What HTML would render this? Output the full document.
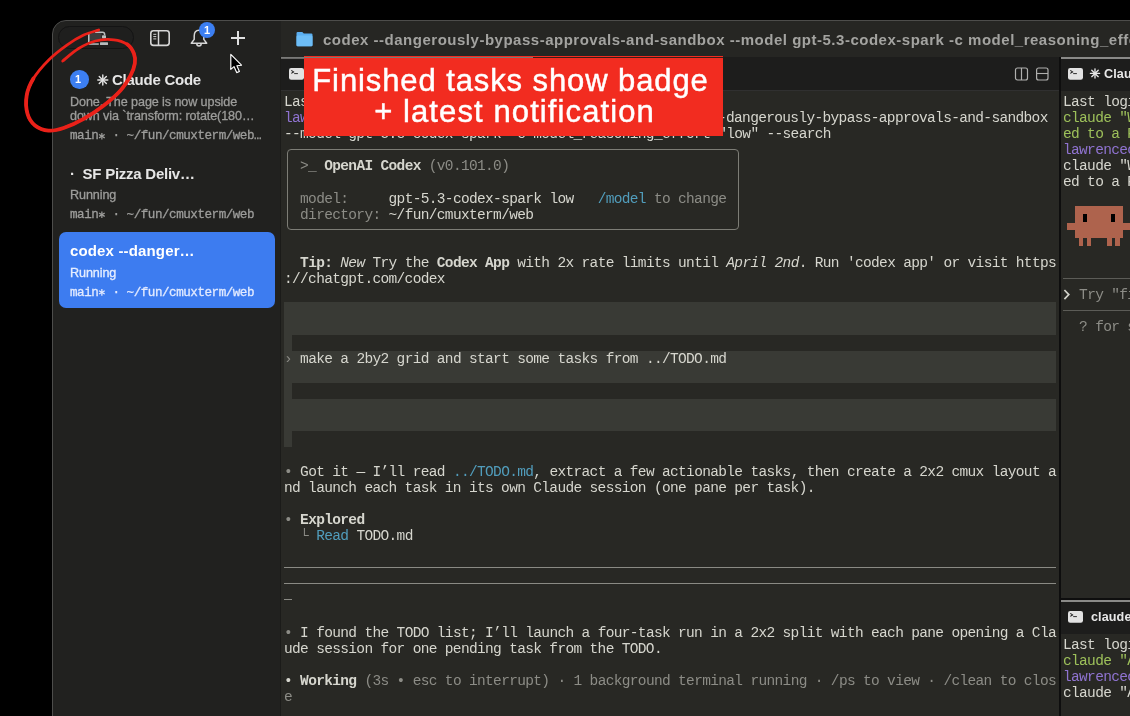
<!DOCTYPE html>
<html><head><meta charset="utf-8"><style>
html,body{margin:0;padding:0;width:1130px;height:716px;overflow:hidden;background:#000;}
body{position:relative;font-family:"Liberation Sans",sans-serif;}
.abs,.t{will-change:transform;}
.t{position:absolute;white-space:pre;font-family:"Liberation Mono",monospace;font-size:14.5px;letter-spacing:-0.660px;line-height:16.09px;height:16.09px;color:#d6d6ce;}
.abs{position:absolute;}
</style></head><body>
<!-- window -->
<div class="abs" style="left:52px;top:20px;width:1100px;height:720px;background:#21211f;border:1px solid #4d4d4b;border-radius:14px 0 0 0;box-sizing:border-box;overflow:hidden">
</div>
<div class="abs" style="left:280px;top:57px;width:2px;height:659px;background:#1b1b19"></div>
<!-- title bar right portion -->
<div class="abs" style="left:281px;top:21px;width:849px;height:36px;background:#262623"></div>
<!-- middle pane -->
<div class="abs" style="left:281px;top:57px;width:778px;height:659px;background:#282824"></div>
<div class="abs" style="left:281px;top:57px;width:778px;height:33.5px;background:#1d1d1c;border-bottom:1px solid #303030;box-sizing:border-box"></div>
<div class="abs" style="left:281px;top:57px;width:200px;height:1.5px;background:#6a6a68"></div>
<!-- divider -->
<div class="abs" style="left:1059px;top:57px;width:2px;height:659px;background:#0e0e0e"></div>
<!-- right top pane -->
<div class="abs" style="left:1061px;top:57px;width:69px;height:541px;background:#282824"></div>
<div class="abs" style="left:1061px;top:57px;width:69px;height:33.5px;background:#1d1d1c"></div>
<div class="abs" style="left:1061px;top:56.8px;width:69px;height:1.6px;background:#8a8a88"></div>
<!-- right bottom pane -->
<div class="abs" style="left:1061px;top:598px;width:69px;height:2px;background:#0e0e0e"></div>
<div class="abs" style="left:1061px;top:600px;width:69px;height:116px;background:#282824"></div>
<div class="abs" style="left:1061px;top:600px;width:69px;height:33.5px;background:#1d1d1c"></div>
<div class="abs" style="left:1061px;top:600px;width:69px;height:2px;background:#8a8a88"></div>

<div style="position:absolute;left:284px;top:302.37px;width:771.84px;height:32.18px;background:#393a35;"></div>
<div style="position:absolute;left:284px;top:334.55px;width:8.04px;height:16.09px;background:#393a35;"></div>
<div style="position:absolute;left:284px;top:350.64px;width:771.84px;height:32.18px;background:#393a35;"></div>
<div style="position:absolute;left:284px;top:382.82px;width:8.04px;height:16.09px;background:#393a35;"></div>
<div style="position:absolute;left:284px;top:398.91px;width:771.84px;height:32.18px;background:#393a35;"></div>
<div style="position:absolute;left:284px;top:431.09px;width:8.04px;height:16.09px;background:#393a35;"></div>
<div style="position:absolute;left:284px;top:566.9px;width:771.84px;height:1.1px;background:#8a8a84;"></div>
<div style="position:absolute;left:284px;top:583.0px;width:771.84px;height:1.1px;background:#8a8a84;"></div>
<div style="position:absolute;left:284px;top:599.2px;width:8px;height:1.2px;background:#8a8a84;"></div>
<div style="position:absolute;left:1063px;top:277.6px;width:70px;height:1.2px;background:#5c5c57;"></div>
<div style="position:absolute;left:1063px;top:309.8px;width:70px;height:1.2px;background:#5c5c57;"></div>
<div style="position:absolute;left:287.3px;top:149.3px;width:451.5px;height:81px;border:1.1px solid #7d7d76;border-radius:4px;box-sizing:border-box"></div>
<div style="position:absolute;left:1075px;top:205.7px;width:48.3px;height:32.5px;background:#ae634d;"></div>
<div style="position:absolute;left:1067px;top:222.5px;width:63px;height:7.7px;background:#ae634d;"></div>
<div style="position:absolute;left:1082.5px;top:214px;width:4.8px;height:7.8px;background:#000;"></div>
<div style="position:absolute;left:1110.7px;top:214px;width:4.8px;height:7.8px;background:#000;"></div>
<div style="position:absolute;left:1078.7px;top:238px;width:4.6px;height:8px;background:#ae634d;"></div>
<div style="position:absolute;left:1086.6px;top:238px;width:4.6px;height:8px;background:#ae634d;"></div>
<div style="position:absolute;left:1107px;top:238px;width:4.6px;height:8px;background:#ae634d;"></div>
<div style="position:absolute;left:1115px;top:238px;width:4.6px;height:8px;background:#ae634d;"></div>

<div class="t" style="left:284px;top:94.00px;"><span style="">Last login: Fri Mar 13 10:02:11 on ttys004</span></div>
<div class="t" style="left:284px;top:110.09px;"><span style="color:#8f73d0">lawrencechen@Lawrences-MacBook-Pro web % </span><span style="">             </span></div>
<div class="t" style="left:718.16px;top:110.09px;"><span style="">-dangerously-bypass-approvals-and-sandbox</span></div>
<div class="t" style="left:284px;top:126.18px;"><span style="">--model gpt-5.3-codex-spark -c model_reasoning_effort="low" --search</span></div>
<div class="t" style="left:284px;top:158.36px;"><span style="color:#8c8c86">  &gt;_ </span><span style="font-weight:bold">OpenAI Codex</span><span style="color:#8c8c86"> (v0.101.0)</span></div>
<div class="t" style="left:284px;top:190.54px;"><span style="color:#8c8c86">  model:     </span><span style="">gpt-5.3-codex-spark low   </span><span style="color:#519dbc">/model</span><span style="color:#8c8c86"> to change</span></div>
<div class="t" style="left:284px;top:206.63px;"><span style="color:#8c8c86">  directory: </span><span style="">~/fun/cmuxterm/web</span></div>
<div class="t" style="left:284px;top:254.90px;"><span style="">  </span><span style="font-weight:bold">Tip:</span><span style=""> </span><span style="font-style:italic">New</span><span style=""> Try the </span><span style="font-weight:bold">Codex App</span><span style=""> with 2x rate limits until </span><span style="font-style:italic">April 2nd</span><span style="">. Run 'codex app' or visit https</span></div>
<div class="t" style="left:284px;top:270.99px;"><span style="">://chatgpt.com/codex</span></div>
<div class="t" style="left:284px;top:351.44px;"><span style="color:#8c8c86">› </span><span style="">make a 2by2 grid and start some tasks from ../TODO.md</span></div>
<div class="t" style="left:284px;top:464.07px;"><span style="color:#8c8c86">• </span><span style="">Got it — I’ll read </span><span style="color:#519dbc">../TODO.md</span><span style="">, extract a few actionable tasks, then create a 2x2 cmux layout a</span></div>
<div class="t" style="left:284px;top:480.16px;"><span style="">nd launch each task in its own Claude session (one pane per task).</span></div>
<div class="t" style="left:284px;top:512.34px;"><span style="color:#8c8c86">• </span><span style="font-weight:bold">Explored</span></div>
<div class="t" style="left:284px;top:528.43px;"><span style="color:#8c8c86">  └ </span><span style="color:#519dbc">Read</span><span style=""> TODO.md</span></div>
<div class="t" style="left:284px;top:624.97px;"><span style="color:#8c8c86">• </span><span style="">I found the TODO list; I’ll launch a four-task run in a 2x2 split with each pane opening a Cla</span></div>
<div class="t" style="left:284px;top:641.06px;"><span style="">ude session for one pending task from the TODO.</span></div>
<div class="t" style="left:284px;top:673.24px;"><span style="">• </span><span style="font-weight:bold">Working</span><span style="color:#8c8c86"> (3s • esc to interrupt) · 1 background terminal running · /ps to view · /clean to clos</span></div>
<div class="t" style="left:284px;top:689.33px;"><span style="color:#8c8c86">e</span></div>
<div class="t" style="left:1063px;top:94.00px;"><span style="">Last login: Fri</span></div>
<div class="t" style="left:1063px;top:110.09px;"><span style="color:#9dc05a">claude "Write</span></div>
<div class="t" style="left:1063px;top:126.18px;"><span style="color:#9dc05a">ed to a README</span></div>
<div class="t" style="left:1063px;top:142.27px;"><span style="color:#8f73d0">lawrencechen@</span></div>
<div class="t" style="left:1063px;top:158.36px;"><span style="">claude "Write</span></div>
<div class="t" style="left:1063px;top:174.45px;"><span style="">ed to a README</span></div>
<div class="t" style="left:1063px;top:287.08px;"><span style="">  </span><span style="color:#8c8c86">Try "fix</span></div>
<svg class="abs" style="left:0;top:0;overflow:visible" width="1" height="1"><polyline points="1064.4,290.0 1068.8,294.6 1064.4,299.2" fill="none" stroke="#d2d2ca" stroke-width="1.7"/></svg>
<div class="t" style="left:1063px;top:319.26px;"><span style="color:#8c8c86">  ? for sh</span></div>
<div class="t" style="left:1063px;top:637.00px;"><span style="">Last login: Fri</span></div>
<div class="t" style="left:1063px;top:653.09px;"><span style="color:#9dc05a">claude "Add</span></div>
<div class="t" style="left:1063px;top:669.18px;"><span style="color:#8f73d0">lawrencechen@</span></div>
<div class="t" style="left:1063px;top:685.27px;"><span style="">claude "Add</span></div>


<!-- title bar: pill -->
<div class="abs" style="left:58px;top:26px;width:76px;height:23px;border:1px solid #141414;border-radius:12px;box-sizing:border-box;background:#1f1f1e"></div>
<!-- pill icon -->
<svg class="abs" style="left:80px;top:25px" width="35" height="25" viewBox="0 0 35 25">
 <rect x="9.5" y="7.6" width="12" height="8" fill="#3c3c3c"/>
 <rect x="8" y="8.5" width="1.6" height="8.5" fill="#b8bcbd"/>
 <path d="M15 7.2 L22.5 7.2 Q24.6 7.2 24.6 9.3 L24.6 10.2" fill="none" stroke="#b8bcbd" stroke-width="1.6"/>
 <rect x="22" y="10.2" width="4" height="3.4" rx="0.8" fill="#b8bcbd"/>
 <rect x="9" y="18.3" width="9.8" height="1.5" fill="#b8bcbd"/>
 <rect x="20" y="17.3" width="8" height="2.8" rx="0.5" fill="#b8bcbd"/>
</svg>
<!-- sidebar toggle icon -->
<svg class="abs" style="left:148px;top:28px" width="24" height="20" viewBox="0 0 24 20">
 <rect x="2.8" y="2.8" width="18.4" height="14.6" rx="2.6" fill="none" stroke="#d6d6d6" stroke-width="1.6"/>
 <line x1="10.5" y1="3" x2="10.5" y2="17.2" stroke="#d6d6d6" stroke-width="1.5"/>
 <line x1="5.3" y1="6.3" x2="8.3" y2="6.3" stroke="#d6d6d6" stroke-width="1"/>
 <line x1="5.3" y1="8.6" x2="8.3" y2="8.6" stroke="#d6d6d6" stroke-width="1"/>
 <line x1="5.3" y1="10.9" x2="8.3" y2="10.9" stroke="#d6d6d6" stroke-width="1"/>
</svg>
<!-- bell -->
<svg class="abs" style="left:188px;top:27px" width="22" height="22" viewBox="0 0 22 22">
 <path d="M11 3.2 C7.6 3.2 6.2 6 6.2 9 L6.2 12.4 L3.3 16.3 L18.7 16.3 L15.8 12.4 L15.8 9 C15.8 6 14.4 3.2 11 3.2 Z" fill="none" stroke="#d6d6d6" stroke-width="1.5" stroke-linejoin="round"/>
 <path d="M8.8 16.8 A2.2 2.2 0 0 0 13.2 16.8" fill="none" stroke="#d6d6d6" stroke-width="1.5"/>
</svg>
<div class="abs" style="left:199px;top:22px;width:16px;height:16px;border-radius:50%;background:#3c7ff2;color:#fff;font:bold 11px 'Liberation Sans';text-align:center;line-height:16px">1</div>
<!-- plus -->
<div class="abs" style="left:231px;top:37.4px;width:14px;height:2px;background:#e0e0e0"></div>
<div class="abs" style="left:237px;top:31.4px;width:2px;height:14px;background:#e0e0e0"></div>

<!-- title -->
<svg class="abs" style="left:295px;top:30px" width="20" height="18" viewBox="0 0 20 18">
 <path d="M1.5 3.2 Q1.5 2 2.7 2 L7.3 2 L8.8 3.6 L16.3 3.6 Q17.5 3.6 17.5 4.8 L17.5 15 Q17.5 16.2 16.3 16.2 L2.7 16.2 Q1.5 16.2 1.5 15 Z" fill="#5aaef0"/>
 <rect x="1.5" y="5.6" width="16" height="10.6" rx="1.2" fill="#6dbdf6"/>
</svg>
<div class="abs" style="left:323px;top:31px;white-space:pre;font:bold 15px 'Liberation Sans';letter-spacing:0.51px;color:#a3a3a0">codex --dangerously-bypass-approvals-and-sandbox --model gpt-5.3-codex-spark -c model_reasoning_effort="low" --search</div>

<!-- tab icons -->
<svg class="abs" style="left:288.6px;top:68.2px" width="15" height="11.8" viewBox="0 0 15 11.8"><rect x="0" y="0" width="15" height="11.8" rx="2.2" fill="#e2e2e2"/><path d="M2.3 2.4 L4.6 3.9 L2.3 5.4" fill="none" stroke="#1a1a1a" stroke-width="1.05"/><line x1="5.2" y1="5.6" x2="8.9" y2="5.6" stroke="#1a1a1a" stroke-width="0.9"/></svg>
<svg class="abs" style="left:1068px;top:68px" width="15" height="11.8" viewBox="0 0 15 11.8"><rect x="0" y="0" width="15" height="11.8" rx="2.2" fill="#e2e2e2"/><path d="M2.3 2.4 L4.6 3.9 L2.3 5.4" fill="none" stroke="#1a1a1a" stroke-width="1.05"/><line x1="5.2" y1="5.6" x2="8.9" y2="5.6" stroke="#1a1a1a" stroke-width="0.9"/></svg>
<svg class="abs" style="left:0;top:0;overflow:visible" width="1" height="1"><line x1="1090.40" y1="73.40" x2="1099.60" y2="73.40" stroke="#e6e6e6" stroke-width="1.35" stroke-linecap="round"/><line x1="1091.75" y1="70.15" x2="1098.25" y2="76.65" stroke="#e6e6e6" stroke-width="1.35" stroke-linecap="round"/><line x1="1095.00" y1="68.80" x2="1095.00" y2="78.00" stroke="#e6e6e6" stroke-width="1.35" stroke-linecap="round"/><line x1="1098.25" y1="70.15" x2="1091.75" y2="76.65" stroke="#e6e6e6" stroke-width="1.35" stroke-linecap="round"/></svg>
<div class="abs" style="left:1104px;top:67.53px;white-space:pre;font:bold 12.6px 'Liberation Sans';line-height:1;letter-spacing:0.1px;color:#e8e8e8;">Claude Code</div>
<svg class="abs" style="left:1068px;top:611px" width="15" height="11.8" viewBox="0 0 15 11.8"><rect x="0" y="0" width="15" height="11.8" rx="2.2" fill="#e2e2e2"/><path d="M2.3 2.4 L4.6 3.9 L2.3 5.4" fill="none" stroke="#1a1a1a" stroke-width="1.05"/><line x1="5.2" y1="5.6" x2="8.9" y2="5.6" stroke="#1a1a1a" stroke-width="0.9"/></svg>
<div class="abs" style="left:1090.8px;top:610.83px;white-space:pre;font:bold 12.6px 'Liberation Sans';line-height:1;letter-spacing:0.1px;color:#e8e8e8;">claude "Add a</div>

<!-- split icons -->
<svg class="abs" style="left:1013px;top:66px" width="38" height="16" viewBox="0 0 38 16">
 <rect x="2.5" y="2" width="12" height="12" rx="2" fill="none" stroke="#b0b0ae" stroke-width="1.2"/>
 <line x1="8.5" y1="2" x2="8.5" y2="14" stroke="#b0b0ae" stroke-width="1.2"/>
 <rect x="23.6" y="2" width="11.4" height="12" rx="2" fill="none" stroke="#b0b0ae" stroke-width="1.2"/>
 <line x1="23.6" y1="7.5" x2="35" y2="7.5" stroke="#b0b0ae" stroke-width="1.1"/>
</svg>

<!-- sidebar -->
<div class="abs" style="left:70px;top:70px;width:18.5px;height:18.5px;border-radius:50%;background:#3c7ff2"></div>
<div class="abs" style="left:75.3px;top:74.29px;white-space:pre;font:bold 11px 'Liberation Sans';line-height:1;letter-spacing:0px;color:#fff;">1</div>
<svg class="abs" style="left:0;top:0;overflow:visible" width="1" height="1"><line x1="97.80" y1="80.00" x2="107.80" y2="80.00" stroke="#e2e2e2" stroke-width="1.45" stroke-linecap="round"/><line x1="99.26" y1="76.46" x2="106.34" y2="83.54" stroke="#e2e2e2" stroke-width="1.45" stroke-linecap="round"/><line x1="102.80" y1="75.00" x2="102.80" y2="85.00" stroke="#e2e2e2" stroke-width="1.45" stroke-linecap="round"/><line x1="106.34" y1="76.46" x2="99.26" y2="83.54" stroke="#e2e2e2" stroke-width="1.45" stroke-linecap="round"/></svg>
<div class="abs" style="left:112.4px;top:72.20px;white-space:pre;font:bold 15px 'Liberation Sans';line-height:1;letter-spacing:-0.25px;color:#e6e6e6;">Claude Code</div>
<div class="abs" style="left:70px;top:95.63px;white-space:pre;font:12.6px 'Liberation Sans';line-height:1;letter-spacing:-0.1px;color:#9d9d9b;-webkit-text-stroke:0.3px #9d9d9b;">Done. The page is now upside</div>
<div class="abs" style="left:70px;top:110.23px;white-space:pre;font:12.6px 'Liberation Sans';line-height:1;letter-spacing:-0.1px;color:#9d9d9b;-webkit-text-stroke:0.3px #9d9d9b;">down via `transform: rotate(180…</div>
<div class="abs" style="left:70px;top:130.44px;white-space:pre;font:12.6px 'Liberation Mono';line-height:1;letter-spacing:-0.48px;color:#9d9d9b;-webkit-text-stroke:0.3px #9d9d9b;">main  · ~/fun/cmuxterm/web…</div>
<svg class="abs" style="left:0;top:0;overflow:visible" width="1" height="1"><line x1="101.86" y1="132.90" x2="101.86" y2="139.50" stroke="#9d9d9b" stroke-width="1.25" stroke-linecap="butt"/><line x1="104.72" y1="134.55" x2="99.00" y2="137.85" stroke="#9d9d9b" stroke-width="1.25" stroke-linecap="butt"/><line x1="104.72" y1="137.85" x2="99.00" y2="134.55" stroke="#9d9d9b" stroke-width="1.25" stroke-linecap="butt"/></svg>
<div class="abs" style="left:70px;top:165.80px;white-space:pre;font:bold 15px 'Liberation Sans';line-height:1;letter-spacing:-0.25px;color:#e6e6e6;">·  SF Pizza Deliv…</div>
<div class="abs" style="left:70px;top:188.93px;white-space:pre;font:12.6px 'Liberation Sans';line-height:1;letter-spacing:-0.1px;color:#9d9d9b;-webkit-text-stroke:0.3px #9d9d9b;">Running</div>
<div class="abs" style="left:70px;top:208.94px;white-space:pre;font:12.6px 'Liberation Mono';line-height:1;letter-spacing:-0.48px;color:#9d9d9b;-webkit-text-stroke:0.3px #9d9d9b;">main  · ~/fun/cmuxterm/web</div>
<svg class="abs" style="left:0;top:0;overflow:visible" width="1" height="1"><line x1="101.86" y1="211.40" x2="101.86" y2="218.00" stroke="#9d9d9b" stroke-width="1.25" stroke-linecap="butt"/><line x1="104.72" y1="213.05" x2="99.00" y2="216.35" stroke="#9d9d9b" stroke-width="1.25" stroke-linecap="butt"/><line x1="104.72" y1="216.35" x2="99.00" y2="213.05" stroke="#9d9d9b" stroke-width="1.25" stroke-linecap="butt"/></svg>
<div class="abs" style="left:59px;top:232px;width:216px;height:76px;border-radius:7px;background:#3d7cf0"></div>
<div class="abs" style="left:70px;top:243.40px;white-space:pre;font:bold 15px 'Liberation Sans';line-height:1;letter-spacing:0.15px;color:#ffffff;">codex --danger…</div>
<div class="abs" style="left:70px;top:266.63px;white-space:pre;font:12.6px 'Liberation Sans';line-height:1;letter-spacing:-0.1px;color:#e6eeff;-webkit-text-stroke:0.3px #e6eeff;">Running</div>
<div class="abs" style="left:70px;top:286.64px;white-space:pre;font:12.6px 'Liberation Mono';line-height:1;letter-spacing:-0.48px;color:#e2eaff;-webkit-text-stroke:0.3px #e2eaff;">main  · ~/fun/cmuxterm/web</div>
<svg class="abs" style="left:0;top:0;overflow:visible" width="1" height="1"><line x1="101.86" y1="289.10" x2="101.86" y2="295.70" stroke="#e2eaff" stroke-width="1.25" stroke-linecap="butt"/><line x1="104.72" y1="290.75" x2="99.00" y2="294.05" stroke="#e2eaff" stroke-width="1.25" stroke-linecap="butt"/><line x1="104.72" y1="294.05" x2="99.00" y2="290.75" stroke="#e2eaff" stroke-width="1.25" stroke-linecap="butt"/></svg>

<!-- red banner -->
<div class="abs" style="left:304px;top:56px;width:419px;height:79.5px;background:#f22c20"></div>
<div class="abs" style="left:281px;top:57px;width:252px;height:1px;background:#7a7a78"></div>
<div class="abs" style="left:533px;top:57px;width:190px;height:1px;background:#3a1d1a"></div>
<div class="abs" style="left:300.5px;top:63.3px;width:419px;text-align:center;white-space:pre;font:31px 'Liberation Sans';letter-spacing:0.9px;line-height:36px;color:#fff;-webkit-text-stroke:0.45px #fff">Finished tasks show badge</div>
<div class="abs" style="left:305px;top:94.0px;width:419px;text-align:center;white-space:pre;font:31px 'Liberation Sans';letter-spacing:1.1px;line-height:36px;color:#fff;-webkit-text-stroke:0.45px #fff">+ latest notification</div>

<!-- red circle annotation -->
<svg class="abs" style="left:0;top:0" width="300" height="200" viewBox="0 0 300 200">
 <path d="M62.7 61.0 C65.3 58.9 73.1 51.8 78.6 48.5 C84.0 45.2 89.5 42.5 95.4 41.0 C101.3 39.5 108.5 39.2 113.8 39.8 C119.1 40.3 123.8 42.0 127.2 44.3 C130.6 46.6 132.6 50.3 133.9 53.5 C135.2 56.7 135.4 60.0 134.8 63.6 C134.2 67.2 133.0 70.8 130.6 75.3 C128.2 79.8 125.0 85.4 120.5 90.4 C116.0 95.4 109.9 100.7 103.8 105.4 C97.7 110.1 90.4 115.0 83.7 118.8 C77.0 122.6 69.5 126.0 63.6 128.0 C57.7 130.0 53.3 131.0 48.5 130.6 C43.7 130.2 38.5 128.3 35.0 125.5 C31.5 122.7 28.9 118.8 27.5 113.8 C26.1 108.8 25.7 101.3 26.7 95.4 C27.7 89.5 29.8 84.5 33.4 78.6 C37.0 72.7 42.9 65.8 48.5 60.2 C54.1 54.6 61.0 49.3 66.9 45.1 C72.8 40.9 78.4 37.6 83.7 35.1 C89.0 32.6 96.2 30.9 98.7 30.0" fill="none" stroke="#ea2119" stroke-width="2.8" stroke-linecap="round" stroke-linejoin="round"/>
 <path d="M127.2 44.3 C130.6 46.6 132.6 50.3 133.9 53.5 C135.2 56.7 135.4 60.0 134.8 63.6 C134.2 67.2 133.0 70.8 130.6 75.3 C128.2 79.8 125.0 85.4 120.5 90.4 C116.0 95.4 109.9 100.7 103.8 105.4 C97.7 110.1 90.4 115.0 83.7 118.8 C77.0 122.6 69.5 126.0 63.6 128.0 C57.7 130.0 53.3 131.0 48.5 130.6 C43.7 130.2 38.5 128.3 35.0 125.5 C31.5 122.7 28.9 118.8 27.5 113.8 C26.1 108.8 25.7 101.3 26.7 95.4 C27.7 89.5 29.8 84.5 33.4 78.6" fill="none" stroke="#ea2119" stroke-width="3.8" stroke-linecap="round"/>
</svg>
<!-- mouse cursor -->
<svg class="abs" style="left:229px;top:52.5px" width="18" height="24" viewBox="0 0 18 24">
 <path d="M1.8 1.3 L1.8 16.4 L5.0 13.6 L7.7 19.6 L10.4 18.5 L7.9 12.7 L12.5 12.2 Z" fill="#000" stroke="#fff" stroke-width="1.15" stroke-linejoin="round"/>
</svg>
</body></html>
